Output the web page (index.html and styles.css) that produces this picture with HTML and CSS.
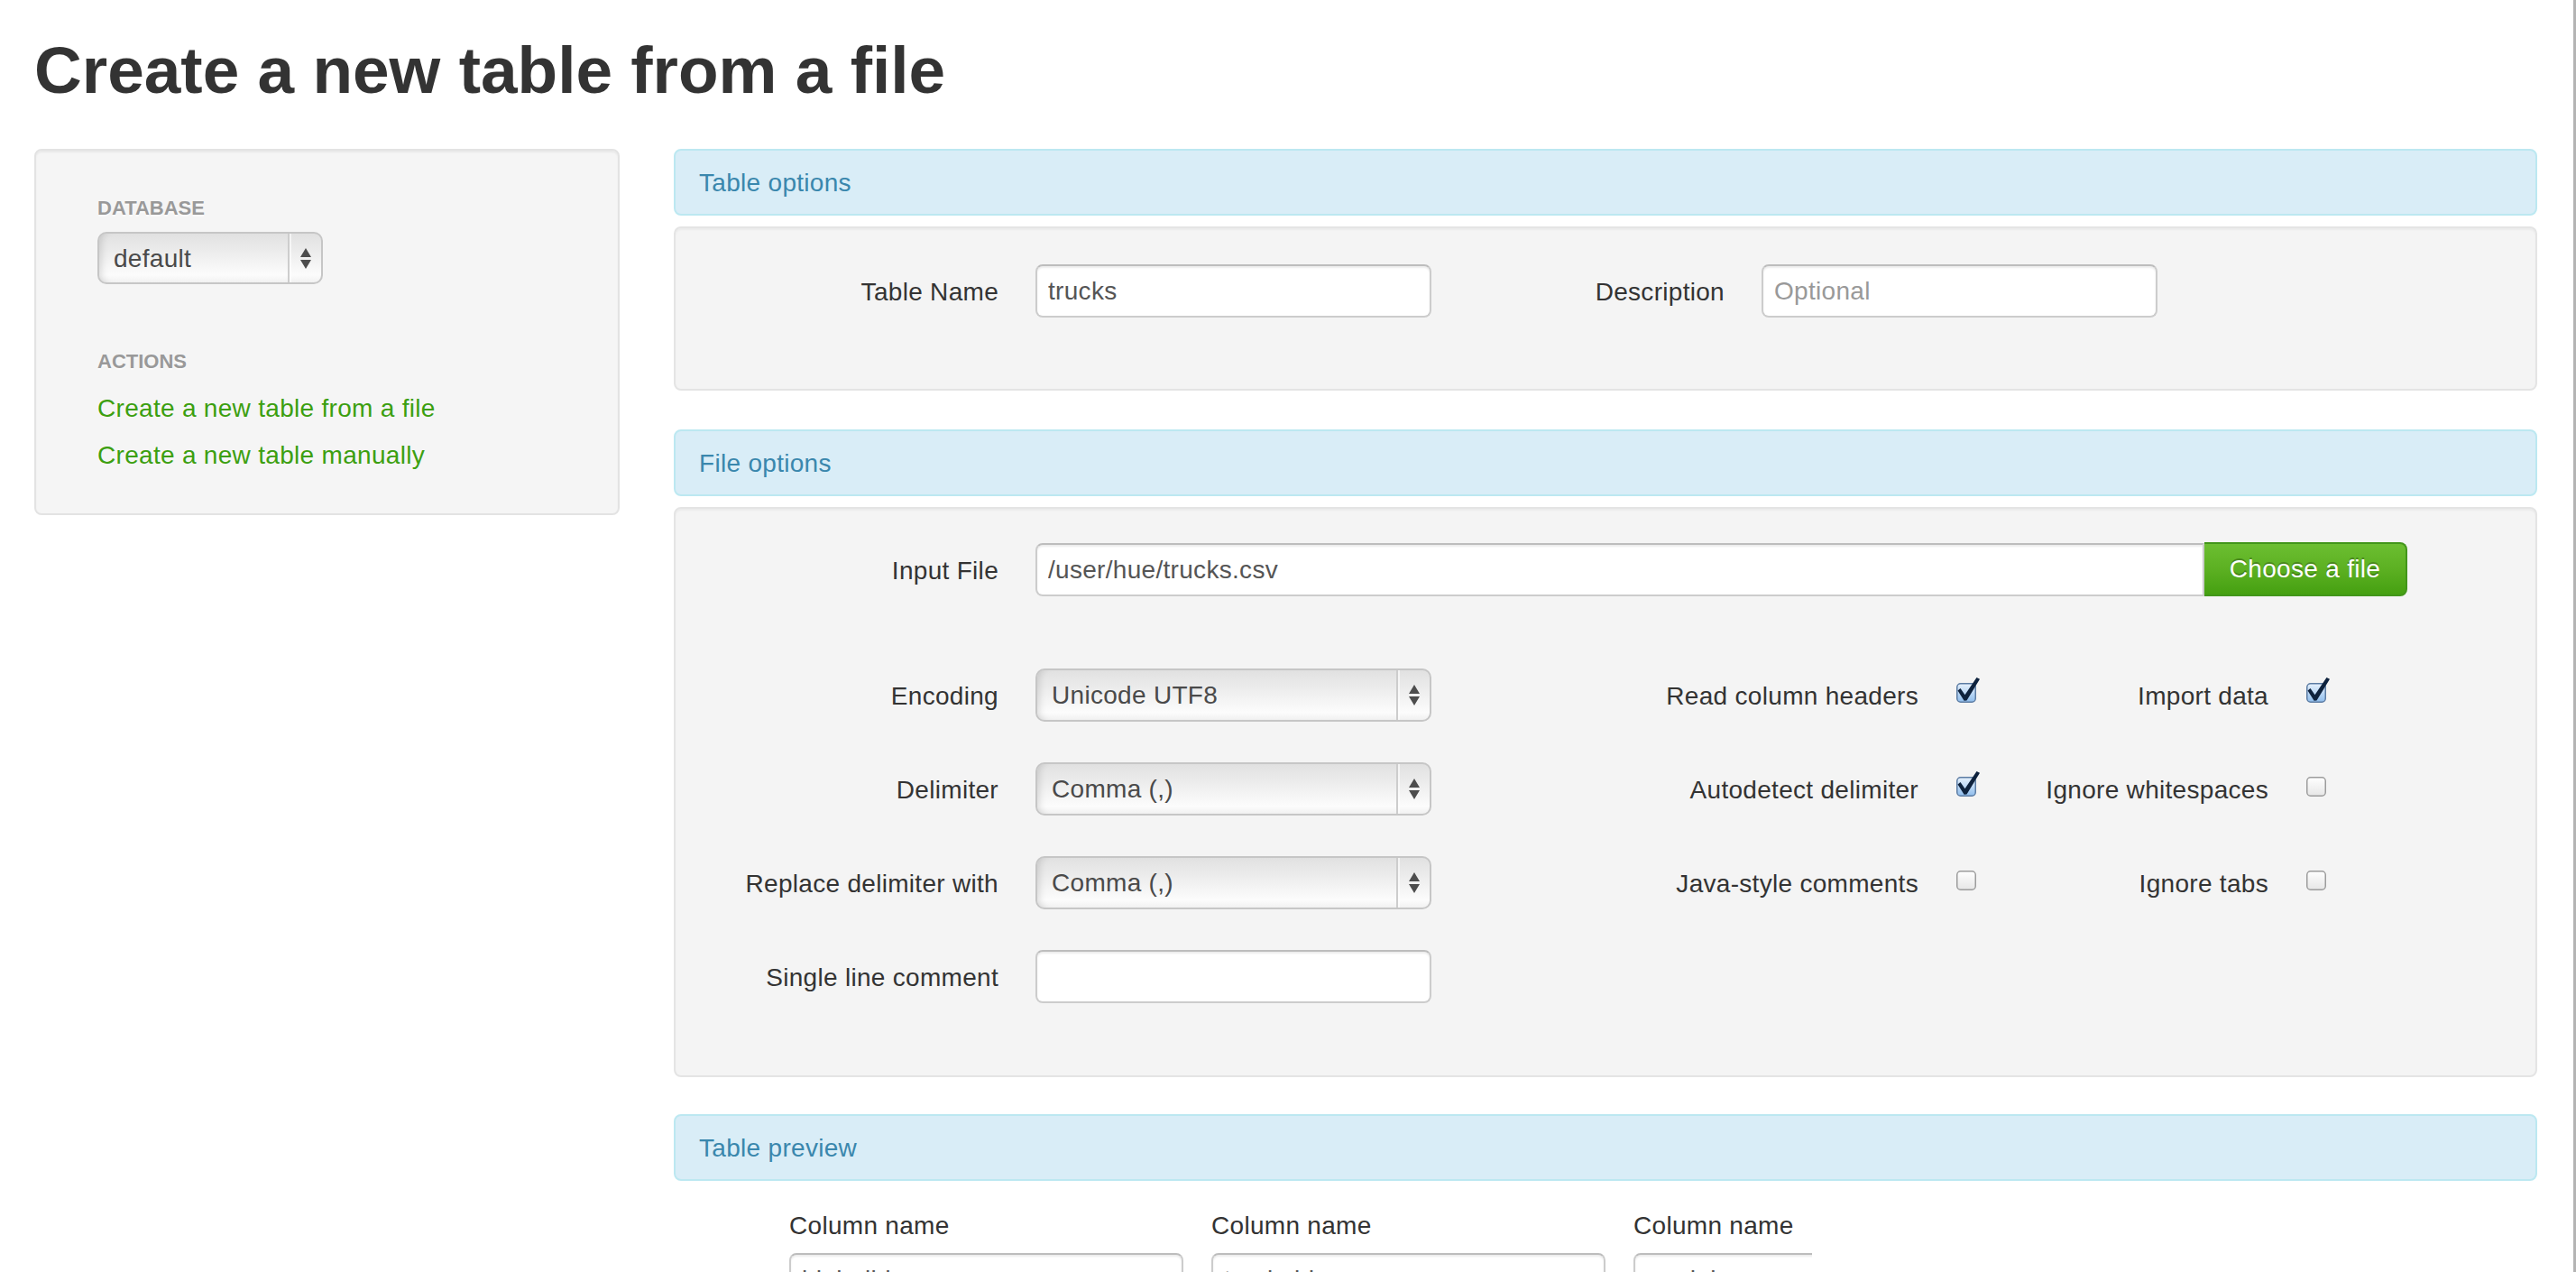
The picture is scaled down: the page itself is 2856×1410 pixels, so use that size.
FILE: index.html
```html
<!DOCTYPE html>
<html lang="en">
<head>
<meta charset="utf-8">
<title>Create a new table from a file</title>
<link rel="stylesheet" href="styles.css">
</head>
<body>
<svg class="svg-defs" width="0" height="0" aria-hidden="true">
  <defs>
    <linearGradient id="cbOn" x1="0" y1="0" x2="0" y2="1">
      <stop offset="0" stop-color="#e6f1fc"/>
      <stop offset="0.5" stop-color="#bcd8f5"/>
      <stop offset="1" stop-color="#8fbdec"/>
    </linearGradient>
    <linearGradient id="cbOff" x1="0" y1="0" x2="0" y2="1">
      <stop offset="0" stop-color="#ffffff"/>
      <stop offset="1" stop-color="#e6e6e6"/>
    </linearGradient>
  </defs>
</svg>
<div class="page">
  <h1 class="page-title">Create a new table from a file</h1>
  <div class="layout">
    <aside class="sidebar">
      <ul class="nav-list">
        <li class="nav-header">Database</li>
        <li>
          <div class="select select-db">
            <span class="select-value">default</span>
            <span class="select-arrows"><svg width="12" height="23" viewBox="0 0 12 23"><path d="M6 0 L12 10 H0 Z M0 13 H12 L6 23 Z" fill="#4d4d4d"/></svg></span>
          </div>
        </li>
        <li class="nav-header nav-header-actions">Actions</li>
        <li><a class="nav-link" href="#">Create a new table from a file</a></li>
        <li><a class="nav-link" href="#">Create a new table manually</a></li>
      </ul>
    </aside>

    <main class="content">
      <div class="alert">Table options</div>
      <div class="well well-table">
        <div class="form-row form-row-table">
          <div class="field">
            <label class="control-label">Table Name</label>
            <input class="text-input" type="text" value="trucks">
          </div>
          <div class="field">
            <label class="control-label">Description</label>
            <input class="text-input" type="text" placeholder="Optional">
          </div>
        </div>
      </div>

      <div class="alert alert-file">File options</div>
      <div class="well well-file">
        <div class="form-row row-file">
          <div class="field">
            <label class="control-label">Input File</label>
            <div class="input-append">
              <input class="text-input file-input" type="text" value="/user/hue/trucks.csv">
              <button class="btn-choose" type="button">Choose a file</button>
            </div>
          </div>
        </div>

        <div class="form-row">
          <div class="field field-main">
            <label class="control-label">Encoding</label>
            <div class="select select-wide">
              <span class="select-value">Unicode UTF8</span>
              <span class="select-arrows"><svg width="12" height="23" viewBox="0 0 12 23"><path d="M6 0 L12 10 H0 Z M0 13 H12 L6 23 Z" fill="#4d4d4d"/></svg></span>
            </div>
          </div>
          <div class="field field-check">
            <label class="control-label">Read column headers</label>
            <svg class="checkbox" width="28" height="28" viewBox="0 0 28 28"><rect x="0.75" y="6.75" width="20.5" height="20.5" rx="4" fill="url(#cbOn)" stroke="#5c7ca3" stroke-width="1.5"/><path d="M1.5 14.5 L4.5 12 L9.5 19.2 L22.5 0 L26 1.8 L11.5 25.6 L8.6 25.8 Z" fill="#0e223d"/></svg>
          </div>
          <div class="field field-check">
            <label class="control-label">Import data</label>
            <svg class="checkbox" width="28" height="28" viewBox="0 0 28 28"><rect x="0.75" y="6.75" width="20.5" height="20.5" rx="4" fill="url(#cbOn)" stroke="#5c7ca3" stroke-width="1.5"/><path d="M1.5 14.5 L4.5 12 L9.5 19.2 L22.5 0 L26 1.8 L11.5 25.6 L8.6 25.8 Z" fill="#0e223d"/></svg>
          </div>
        </div>

        <div class="form-row">
          <div class="field field-main">
            <label class="control-label">Delimiter</label>
            <div class="select select-wide">
              <span class="select-value">Comma (,)</span>
              <span class="select-arrows"><svg width="12" height="23" viewBox="0 0 12 23"><path d="M6 0 L12 10 H0 Z M0 13 H12 L6 23 Z" fill="#4d4d4d"/></svg></span>
            </div>
          </div>
          <div class="field field-check">
            <label class="control-label">Autodetect delimiter</label>
            <svg class="checkbox" width="28" height="28" viewBox="0 0 28 28"><rect x="0.75" y="6.75" width="20.5" height="20.5" rx="4" fill="url(#cbOn)" stroke="#5c7ca3" stroke-width="1.5"/><path d="M1.5 14.5 L4.5 12 L9.5 19.2 L22.5 0 L26 1.8 L11.5 25.6 L8.6 25.8 Z" fill="#0e223d"/></svg>
          </div>
          <div class="field field-check">
            <label class="control-label">Ignore whitespaces</label>
            <svg class="checkbox" width="28" height="28" viewBox="0 0 28 28"><rect x="0.75" y="6.75" width="20.5" height="20.5" rx="4" fill="url(#cbOff)" stroke="#9c9c9c" stroke-width="1.5"/></svg>
          </div>
        </div>

        <div class="form-row">
          <div class="field field-main">
            <label class="control-label">Replace delimiter with</label>
            <div class="select select-wide">
              <span class="select-value">Comma (,)</span>
              <span class="select-arrows"><svg width="12" height="23" viewBox="0 0 12 23"><path d="M6 0 L12 10 H0 Z M0 13 H12 L6 23 Z" fill="#4d4d4d"/></svg></span>
            </div>
          </div>
          <div class="field field-check">
            <label class="control-label">Java-style comments</label>
            <svg class="checkbox" width="28" height="28" viewBox="0 0 28 28"><rect x="0.75" y="6.75" width="20.5" height="20.5" rx="4" fill="url(#cbOff)" stroke="#9c9c9c" stroke-width="1.5"/></svg>
          </div>
          <div class="field field-check">
            <label class="control-label">Ignore tabs</label>
            <svg class="checkbox" width="28" height="28" viewBox="0 0 28 28"><rect x="0.75" y="6.75" width="20.5" height="20.5" rx="4" fill="url(#cbOff)" stroke="#9c9c9c" stroke-width="1.5"/></svg>
          </div>
        </div>

        <div class="form-row">
          <div class="field field-main">
            <label class="control-label">Single line comment</label>
            <input class="text-input" type="text" value="">
          </div>
        </div>
      </div>

      <div class="alert alert-preview">Table preview</div>
      <div class="preview">
        <div class="preview-col">
          <label class="preview-label">Column name</label>
          <input class="text-input preview-input" type="text" value="id_build">
        </div>
        <div class="preview-col">
          <label class="preview-label">Column name</label>
          <input class="text-input preview-input" type="text" value="truck_id">
        </div>
        <div class="preview-col">
          <label class="preview-label">Column name</label>
          <input class="text-input preview-input" type="text" value="model">
        </div>
      </div>
    </main>
  </div>
</div>
</body>
</html>
```

FILE: styles.css
```css
* {
  box-sizing: border-box;
}

html,
body {
  margin: 0;
  padding: 0;
  background: #ffffff;
}

body {
  overflow: hidden;
  font-family: "Liberation Sans", Arial, Helvetica, sans-serif;
  font-size: 28px;
  line-height: 40px;
  color: #333333;
  letter-spacing: 0.3px;
}

.svg-defs {
  display: block;
  width: 0;
  height: 0;
  overflow: hidden;
}

.page {
  height: 1410px;
  overflow: hidden;
  border-right: 3px solid #b4b4b4;
  padding: 38px 0 0 38px;
}

.page-title {
  margin: 0 0 47px;
  font-size: 73px;
  line-height: 80px;
  font-weight: bold;
  color: #333333;
  letter-spacing: 0;
}

.layout {
  display: flex;
  align-items: flex-start;
  gap: 60px;
}

/* Sidebar */
.sidebar {
  flex: none;
  width: 649px;
  background: #f5f5f5;
  border: 2px solid #e3e3e3;
  border-radius: 8px;
  padding: 38px;
  box-shadow: inset 0 2px 2px rgba(0, 0, 0, 0.05);
}

.nav-list {
  list-style: none;
  margin: 0;
  padding: 0 30px;
}

.nav-header {
  padding: 6px 0;
  font-size: 22px;
  line-height: 40px;
  font-weight: bold;
  color: #999999;
  text-transform: uppercase;
  letter-spacing: 0;
  text-shadow: 0 2px 0 rgba(255, 255, 255, 0.5);
}

.nav-header-actions {
  margin-top: 60px;
}

.nav-link {
  display: block;
  padding: 6px 0;
  color: #3c9f10;
  text-decoration: none;
}

/* Fake native select */
.select {
  display: flex;
  height: 59px;
  border: 2px solid #c6c6c6;
  border-radius: 10px;
  background: linear-gradient(to bottom, #e1e1e1 0%, #eaeaea 30%, #f4f4f4 60%, #fcfcfc 85%, #f1f1f1 100%);
  box-shadow: inset 9px 0 8px -7px rgba(0, 0, 0, 0.14);
  color: #4a4a4a;
  letter-spacing: 0.3px;
}

.select-value {
  flex: 1;
  padding-left: 16px;
  line-height: 55px;
  white-space: nowrap;
}

.select-arrows {
  flex: none;
  width: 37px;
  display: flex;
  align-items: center;
  justify-content: center;
  border-left: 2px solid #cdcdcd;
  box-shadow: inset 2px 0 0 rgba(255, 255, 255, 0.6);
}

.select-arrows svg {
  display: block;
}

.select-db {
  width: 250px;
  height: 58px;
}

.select-wide {
  width: 439px;
}

/* Main column */
.content {
  flex: none;
  width: 2066px;
}

.alert {
  background: #d9edf7;
  border: 2px solid #bce8f1;
  border-radius: 8px;
  color: #3a87ad;
  padding: 16px 26px 14px;
  line-height: 40px;
}

.alert-file {
  margin-top: 43px;
}

.alert-preview {
  margin-top: 41px;
}

.well {
  margin-top: 12px;
  background: #f4f4f4;
  border: 2px solid #e4e4e4;
  border-radius: 8px;
  padding: 38px;
  box-shadow: inset 0 2px 2px rgba(0, 0, 0, 0.04);
}

.well-table {
  padding-top: 40px;
}

.form-row {
  display: flex;
  height: 59px;
  margin-bottom: 45px;
}

.form-row-table {
  gap: 5px;
  margin-bottom: 41px;
}

.row-file {
  margin-bottom: 80px;
}

.well-file .form-row:last-child {
  margin-bottom: 42px;
}

.field {
  display: flex;
  flex: none;
  align-items: flex-start;
}

.control-label {
  flex: none;
  width: 320px;
  margin-right: 41px;
  padding-top: 11px;
  line-height: 40px;
  text-align: right;
  white-space: nowrap;
  color: #333333;
}

.field-main {
  width: 1020px;
}

.field-check {
  width: 388px;
}

.field-check .control-label {
  margin-right: 42px;
}

.checkbox {
  display: block;
  flex: none;
  margin-top: 10px;
  overflow: visible;
}

.text-input {
  display: block;
  width: 439px;
  height: 59px;
  margin: 0;
  padding: 1px 12px 0;
  background: #ffffff;
  border: 2px solid #cccccc;
  border-top-color: #bdbdbd;
  border-radius: 8px;
  box-shadow: inset 0 2px 2px rgba(0, 0, 0, 0.075);
  font-family: inherit;
  font-size: 28px;
  letter-spacing: 0.3px;
  color: #555555;
  outline: none;
}

.text-input::placeholder {
  color: #999999;
}

.input-append {
  display: flex;
}

.file-input {
  width: 1296px;
  border-radius: 8px 0 0 8px;
}

.btn-choose {
  flex: none;
  width: 225px;
  height: 60px;
  margin: -1px 0 0;
  padding: 0;
  border: 2px solid #42961a;
  border-left: 0;
  border-radius: 0 8px 8px 0;
  background: linear-gradient(to bottom, #6cbe31 0%, #5cb022 50%, #45a011 100%);
  color: #ffffff;
  font-family: inherit;
  font-size: 28px;
  letter-spacing: 0.3px;
  text-shadow: 0 -2px 0 rgba(0, 0, 0, 0.25);
  cursor: pointer;
}

/* Table preview */
.preview {
  width: 1262px;
  overflow: hidden;
  display: flex;
  gap: 31px;
  padding: 30px 0 0 128px;
}

.preview-col {
  flex: none;
  width: 437px;
}

.preview-label {
  display: block;
  line-height: 40px;
  margin-bottom: 10px;
  white-space: nowrap;
}

.preview-input {
  width: 437px;
}
```
